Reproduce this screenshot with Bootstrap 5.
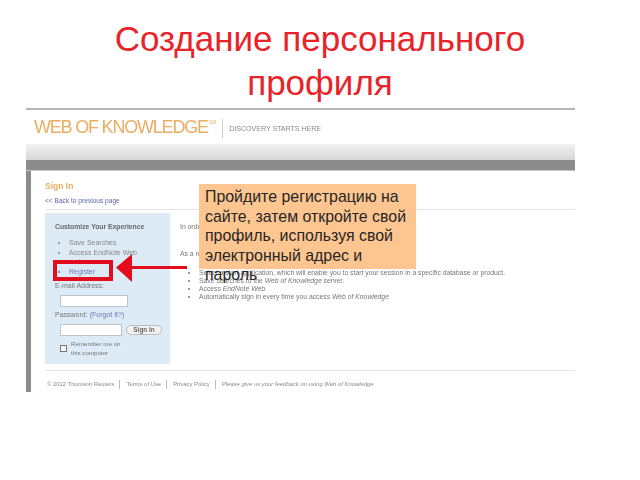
<!DOCTYPE html>
<html lang="ru">
<head>
  <meta charset="UTF-8" />
  <title>Создание персонального профиля</title>
  <link href="https://cdn.jsdelivr.net/npm/bootstrap@5.3.3/dist/css/bootstrap.min.css" rel="stylesheet">
  <style>
    html, body { height: 480px; overflow: hidden; background: #fff; }
    body { font-family: "Liberation Sans", Arial, sans-serif; }

    .slide-title {
      color: #e8232a;
      font-family: "Liberation Sans", Arial, sans-serif;
      font-size: 35px;
      line-height: 44px;
      font-weight: 400;
      padding-top: 17px;
      height: 108px;
      margin: 0;
    }

    .shot-wrap { position: relative; width: 549px; height: 284px; margin-left: 26px; }
    .shot { height: 284px; overflow: hidden; border-top: 2px solid #b5b5b3; filter: blur(.45px); color: #777; font-size: 7px; line-height: 9px; }

    .wok-head { height: 34px; padding: 5px 0 0 8px; }
    .wok-logo { color: #e9ae63; font-size: 18px; line-height: 24px; letter-spacing: -1.2px; }
    .wok-logo sup { font-size: 5px; top: -9px; letter-spacing: 0; margin-left: 1px; }
    .wok-tag { color: #8b8b8b; font-size: 7.2px; line-height: 19px; margin-left: 6px; padding-left: 6px; border-left: 1px solid #ccc; letter-spacing: -.1px; }
    .wok-band { height: 16px; background: linear-gradient(#f2f2f2, #d6d6d6); }
    .wok-dark { height: 11px; background: #8c8c8c; border-bottom: 1px solid #c4c4c4; }

    .wok-body { border-left: 5px solid #8c8c8c; height: 221px; padding: 10px 0 0 14px; }
    .sign-title { color: #e9ae63; font-size: 8.5px; font-weight: 700; line-height: 11px; }
    .back-link { color: #5a64a8; font-size: 6.6px; line-height: 9px; margin-top: 4px; }
    .sign-rule { border-top: 1px solid #e4e4e4; margin: 4px 0 3px; }

    .side-box { width: 125px; height: 151px; background: #dcebf5; padding: 9px 0 0 10px; flex: none; }
    .side-head { color: #666; font-weight: 700; font-size: 6.8px; line-height: 9px; margin-bottom: 7px; }
    .side-list { margin: 0; padding: 0 0 0 14px; color: #888; line-height: 9.6px; font-size: 7px; }
    .side-list li { height: 9.6px; }
    .side-link { color: #6a78b8; }
    .field-label { color: #777; font-size: 7px; line-height: 9px; }
    .mail-label { margin-top: 5px; }
    .fake-input { height: 12px; background: #fff; border: 1px solid #c3c3c3; }
    .field-mail { width: 68px; margin: 5px 0 3px 5px; }
    .pass-label { margin-top: 2px; }
    .pass-row { margin: 5px 0 0 5px; }
    .field-pass { width: 62px; }
    .fake-btn { width: 36px; height: 10px; line-height: 8px; font-size: 6.4px; font-weight: 700; text-align: center; color: #666; background: #f2f2f2; border: 1px solid #bbb; border-radius: 5px; }
    .check-row { margin: 3px 0 0 5px; }
    .fake-check { width: 7px; height: 7px; border: 1px solid #777; background: #f5f5f5; flex: none; }
    .check-text { font-size: 6.2px; line-height: 9px; color: #777; }

    .info-col { padding: 9px 0 0 10px; width: 350px; font-size: 6.8px; }
    .as-line { margin-top: 18px; margin-bottom: 11px; }
    .info-list { margin: 0; padding: 0 0 0 19px; line-height: 8px; color: #777; white-space: nowrap; }

    .wok-foot { border-top: 1px solid #e4e4e4; margin: 6px 0 0 0; padding: 9px 0 0 2px; font-size: 5.9px; line-height: 9px; color: #8a8a8a; width: 530px; }
    .wok-foot span + span { border-left: 1px solid #bbb; margin-left: 5px; padding-left: 6px; }

    .callout {
      position: absolute;
      left: 173px;
      top: 76px;
      width: 217px;
      height: 85px;
      padding: 3px 6px;
      background: #fdc58f;
      color: #262626;
      font-size: 15.9px;
      line-height: 19.6px;
    }
    .reg-box { position: absolute; left: 27px; top: 152px; width: 60px; height: 21px; border: 4px solid #e30d1d; }
    .reg-arrow { position: absolute; left: 88px; top: 144px; }
  </style>
</head>
<body>

  <h1 class="slide-title text-center">Создание персонального<br>профиля</h1>

  <div class="shot-wrap">
    <div class="shot">
      <div class="wok-head d-flex align-items-start">
        <div class="wok-logo">WEB OF KNOWLEDGE<sup>SM</sup></div>
        <div class="wok-tag mt-1">DISCOVERY STARTS HERE</div>
      </div>
      <div class="wok-band"></div>
      <div class="wok-dark"></div>

      <div class="wok-body">
        <div class="sign-title">Sign In</div>
        <div class="back-link">&lt;&lt; Back to previous page</div>
        <div class="sign-rule"></div>

        <div class="d-flex">
          <div class="side-box">
            <div class="side-head">Customize Your Experience</div>
            <ul class="side-list">
              <li>Save Searches</li>
              <li>Access EndNote Web</li>
              <li>and more</li>
              <li class="side-link">Register</li>
            </ul>
            <div class="field-label mail-label">E-mail Address:</div>
            <div class="fake-input field-mail"></div>
            <div class="field-label pass-label">Password: <span class="side-link">(Forgot It?)</span></div>
            <div class="d-flex align-items-center gap-1 pass-row">
              <div class="fake-input field-pass"></div>
              <div class="fake-btn">Sign In</div>
            </div>
            <div class="d-flex align-items-center gap-1 check-row">
              <div class="fake-check"></div>
              <div class="check-text">Remember me on<br>this computer</div>
            </div>
          </div>

          <div class="info-col">
            <div>In order to take advantage of all features of Web of Knowledge, please sign in.</div>
            <div class="as-line">As a registered user, you can:</div>
            <ul class="info-list">
              <li>Select a start application, which will enable you to start your session in a specific database or product.</li>
              <li>Save searches to the <i>Web of Knowledge</i> server.</li>
              <li>Access <i>EndNote Web.</i></li>
              <li>Automatically sign in every time you access <i>Web of Knowledge</i></li>
            </ul>
          </div>
        </div>

        <div class="wok-foot d-flex">
          <span>© 2012 Thomson Reuters</span><span>Terms of Use</span><span>Privacy Policy</span><span><i>Please give us your feedback on using Web of Knowledge</i></span>
        </div>
      </div>
    </div>

    <div class="reg-box"></div>
    <svg class="reg-arrow" width="76" height="32" viewBox="0 0 76 32">
      <path d="M2 15.5 L18 2 V14 H73 V17 H18 V30 Z" fill="#e30d1d"/>
    </svg>
    <div class="callout">Пройдите регистрацию на сайте, затем откройте свой профиль, используя свой электронный адрес и пароль</div>
  </div>

</body>
</html>
